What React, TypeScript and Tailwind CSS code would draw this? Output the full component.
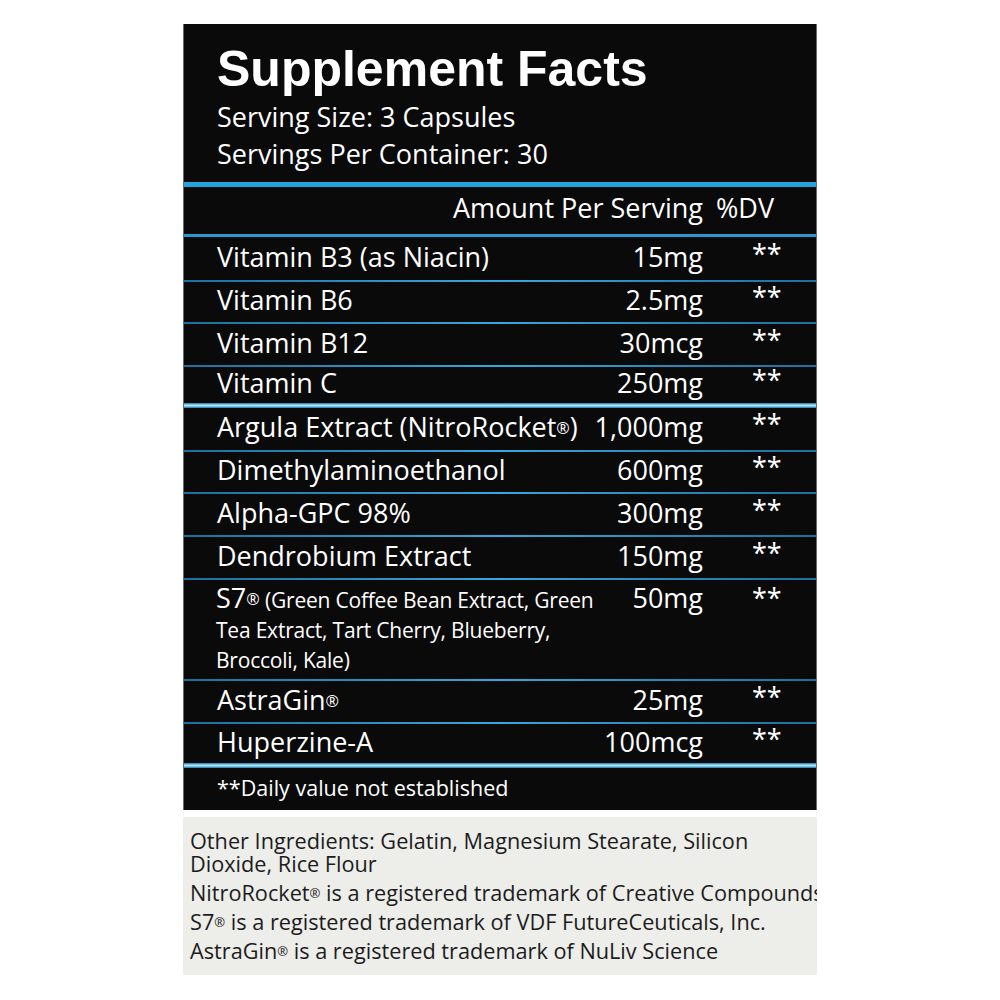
import React from "react";

type Row = {
  name: React.ReactNode;
  amount: string;
  h: string;
  sep: "thin" | "glow" | "none";
};

const reg = <sup className="text-[0.6em] relative -top-[0.2em]">®</sup>;

const rows: Row[] = [
  { name: "Vitamin B3 (as Niacin)", amount: "15mg", h: "h-[43px]", sep: "thin" },
  { name: "Vitamin B6", amount: "2.5mg", h: "h-[40px]", sep: "thin" },
  { name: "Vitamin B12", amount: "30mcg", h: "h-[41px]", sep: "thin" },
  { name: "Vitamin C", amount: "250mg", h: "h-[36px]", sep: "glow" },
  { name: <>Argula Extract (NitroRocket{reg})</>, amount: "1,000mg", h: "h-[42px]", sep: "thin" },
  { name: "Dimethylaminoethanol", amount: "600mg", h: "h-[40px]", sep: "thin" },
  { name: "Alpha-GPC 98%", amount: "300mg", h: "h-[41px]", sep: "thin" },
  { name: "Dendrobium Extract", amount: "150mg", h: "h-[41px]", sep: "thin" },
];

const rows2: Row[] = [
  { name: <>AstraGin{reg}</>, amount: "25mg", h: "h-[41px]", sep: "thin" },
  { name: "Huperzine-A", amount: "100mcg", h: "h-[39px]", sep: "glow" },
];

const font = { fontFamily: '"Open Sans", "Noto Sans", sans-serif' };

function Sep({ kind }: { kind: Row["sep"] }) {
  if (kind === "none") return null;
  if (kind === "glow")
    return <div className="h-[5px] bg-gradient-to-b from-[#1b78b0] via-[#b0ecff] to-[#1b78b0]" />;
  return <div className="h-[2px] bg-gradient-to-r from-[#1f6f9f] via-[#3aa6dc] to-[#1f6f9f]" />;
}

function IngredientRow({ row }: { row: Row }) {
  return (
    <>
      <div className={`${row.h} flex items-center pb-[3px] text-[27px] text-white`}>
        <div className="flex-1 min-w-0 pl-[33px] whitespace-nowrap">{row.name}</div>
        <div className="w-[120px] shrink-0 text-right">{row.amount}</div>
        <div className="w-[113px] shrink-0 pl-[49px] mb-[8px] leading-none">**</div>
      </div>
      <Sep kind={row.sep} />
    </>
  );
}

export default function App() {
  return (
    <div className="w-[1000px] h-[1000px] bg-white pt-[24px]" style={font}>
      <div className="ml-[183px] w-[634px] h-[786px] bg-[#0a0a0a] border-x border-[#6a6a6a]">
        {/* header */}
        <div className="h-[158px] pl-[33px] pt-[20px] text-white">
          <h1
            className="text-[50px] leading-none font-bold"
            style={{ fontFamily: '"Liberation Sans", Arial, sans-serif' }}
          >
            Supplement Facts
          </h1>
          <p className="mt-[4px] text-[27px] leading-[37px]">Serving Size: 3 Capsules</p>
          <p className="text-[27px] leading-[37px]">Servings Per Container: 30</p>
        </div>
        <div className="h-[5px] bg-[#22a3dc]" />
        <div className="h-[47px] flex items-center pb-[4px] text-[27px] text-white">
          <div className="flex-1" />
          <div className="text-right">Amount Per Serving</div>
          <div className="w-[113px] pl-[13px]">%DV</div>
        </div>
        <div className="h-[3px] bg-[#2a98d0]" />

        {rows.map((r, i) => (
          <IngredientRow key={i} row={r} />
        ))}

        {/* S7 row */}
        <div className="h-[99px] flex text-white pt-[3px]">
          <div className="flex-1 min-w-0 pl-[32px] text-[21px] tracking-[-0.01em] leading-[30px]">
            <span className="text-[27px] tracking-normal">S7{reg}</span> (Green Coffee Bean Extract, Green Tea
            Extract, Tart Cherry, Blueberry, Broccoli, Kale)
          </div>
          <div className="w-[90px] shrink-0 text-right text-[27px] leading-[30px]">50mg</div>
          <div className="w-[113px] shrink-0 pl-[49px] text-[27px] leading-[30px]">**</div>
        </div>
        <Sep kind="thin" />

        {rows2.map((r, i) => (
          <IngredientRow key={i} row={r} />
        ))}

        <div className="h-[42px] flex items-center pb-[2px] pl-[33px] text-[21.5px] text-white">
          **Daily value not established
        </div>
      </div>

      <div className="mt-[7px] ml-[183px] w-[634px] h-[158px] bg-[#ededea] pt-[12px] pl-[7px] overflow-hidden text-[#1c1c1c] text-[21.7px]">
        <p className="leading-[23px] pr-[40px]">Other Ingredients: Gelatin, Magnesium Stearate, Silicon Dioxide, Rice Flour</p>
        <p className="mt-[3px] leading-[29px] whitespace-nowrap">
          NitroRocket{reg} is a registered trademark of Creative Compounds
        </p>
        <p className="leading-[29px] whitespace-nowrap">S7{reg} is a registered trademark of VDF FutureCeuticals, Inc.</p>
        <p className="leading-[29px] whitespace-nowrap">AstraGin{reg} is a registered trademark of NuLiv Science</p>
      </div>
    </div>
  );
}
